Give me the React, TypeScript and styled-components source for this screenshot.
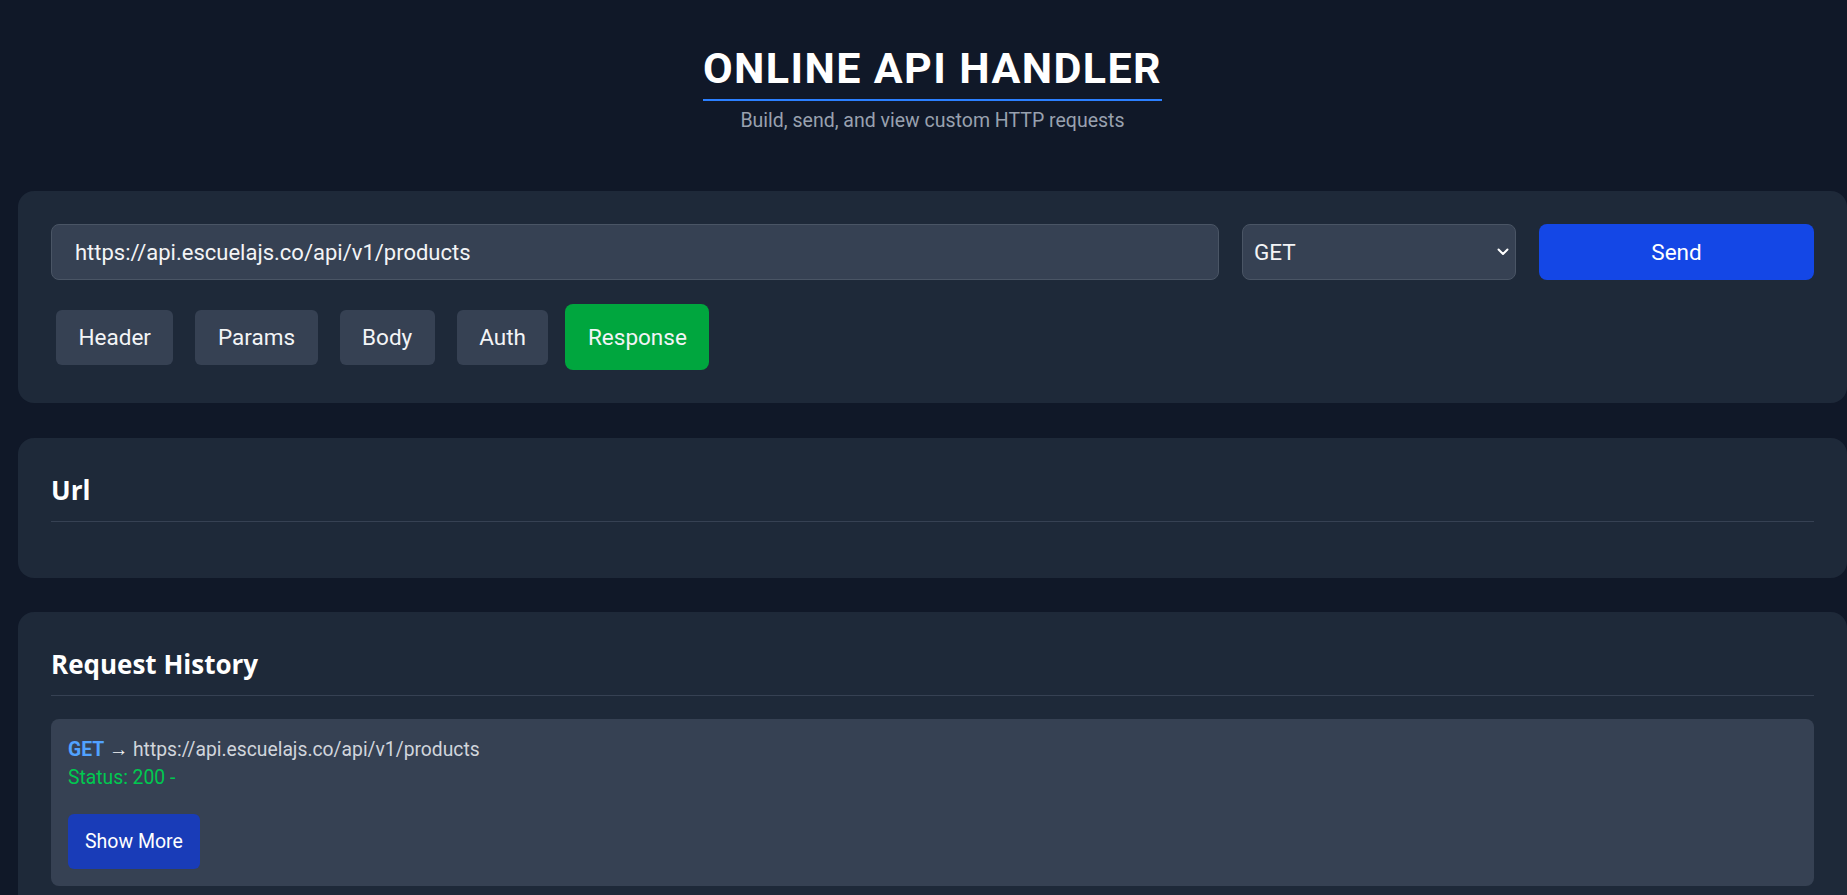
import React from "react";
import styled, { createGlobalStyle } from "styled-components";

const GlobalStyle = createGlobalStyle`
  html, body {
    margin: 0;
    padding: 0;
    overflow: hidden;
    background: #101828;
  }
  body {
    font-family: Roboto, "Liberation Sans", sans-serif;
    color: #f3f4f6;
  }
  * { box-sizing: border-box; }
`;

const Page = styled.div`
  padding: 0 0 0 18px;
`;

const Header = styled.header`
  text-align: center;
  padding-top: 42px;
`;

const Title = styled.h1`
  display: inline-block;
  margin: 0;
  font-size: 43px;
  line-height: 52px;
  font-weight: 700;
  letter-spacing: 1.4px;
  color: #ffffff;
  padding-bottom: 5px;
  border-bottom: 2px solid #2b7fff;
`;

const Subtitle = styled.p`
  margin: 7px 0 0;
  font-size: 19.5px;
  line-height: 26px;
  color: #99a1af;
`;

const Main = styled.main`
  margin-top: 57px;
  display: flex;
  flex-direction: column;
  gap: 34.5px;
`;

const Card = styled.section`
  background: #1e2939;
  border-radius: 16px;
  padding: 33px;
`;

const RequestBar = styled.div`
  display: grid;
  grid-template-columns: 1fr 274px 275px;
  gap: 23px;
  height: 56px;
`;

const UrlInput = styled.input`
  height: 56px;
  border: 1px solid #4a5565;
  background: #364153;
  border-radius: 8px;
  padding: 0 23px;
  font-family: Roboto, "Liberation Sans", sans-serif;
  font-size: 22px;
  color: #f3f4f6;
  outline: none;
`;

const SelectWrap = styled.div`
  position: relative;
  height: 56px;
`;

const MethodSelect = styled.select`
  appearance: none;
  -webkit-appearance: none;
  width: 100%;
  height: 56px;
  border: 1px solid #4a5565;
  background: #364153;
  border-radius: 8px;
  padding: 0 11px;
  font-family: Roboto, "Liberation Sans", sans-serif;
  font-size: 22.5px;
  color: #f3f4f6;
  outline: none;
`;

const Chevron = styled.svg`
  position: absolute;
  right: 7px;
  top: 50%;
  width: 12px;
  height: 8px;
  margin-top: -4px;
  pointer-events: none;
`;

const SendButton = styled.button`
  height: 56px;
  border: none;
  border-radius: 8px;
  background: #1447e6;
  color: #ffffff;
  font-family: Roboto, "Liberation Sans", sans-serif;
  font-size: 22.5px;
  cursor: pointer;
`;

const Tabs = styled.div`
  display: flex;
  align-items: center;
  gap: 12px;
  margin-top: 24px;
  height: 66px;
`;

const Tab = styled.button<{ $active?: boolean }>`
  height: ${(p) => (p.$active ? "66px" : "55px")};
  margin: 0 ${(p) => (p.$active ? "0" : "5px")};
  padding: 0 22.5px;
  border: none;
  border-radius: ${(p) => (p.$active ? "8px" : "6px")};
  background: ${(p) => (p.$active ? "#00a63e" : "#364153")};
  color: #f3f4f6;
  font-family: Roboto, "Liberation Sans", sans-serif;
  font-size: 22.5px;
  cursor: pointer;
`;

const SectionTitle = styled.h2`
  margin: 0 0 23px;
  padding-bottom: 11px;
  border-bottom: 1px solid #364153;
  font-family: "Open Sans", Roboto, sans-serif;
  font-size: 26px;
  line-height: 39px;
  font-weight: 700;
  color: #ffffff;
`;

const HistoryItem = styled.div`
  background: #364153;
  border-radius: 8px;
  padding: 17px;
`;

const HistoryLine = styled.div<{ $status?: boolean }>`
  font-size: 19.3px;
  line-height: 28px;
  color: ${(p) => (p.$status ? "#00c950" : "#d1d5dc")};
`;

const Method = styled.span`
  font-weight: 700;
  color: #51a2ff;
`;

const Arrow = styled.span`
  color: #f3f4f6;
`;

const ShowMore = styled.button`
  margin-top: 22px;
  height: 55px;
  padding: 0 17px;
  border: none;
  border-radius: 6px;
  background: #193cb8;
  color: #ffffff;
  font-family: Roboto, "Liberation Sans", sans-serif;
  font-size: 19.5px;
  cursor: pointer;
`;

const tabs = ["Header", "Params", "Body", "Auth", "Response"];

export default function App() {
  const url = "https://api.escuelajs.co/api/v1/products";
  return (
    <Page>
      <GlobalStyle />
      <Header>
        <Title>ONLINE API HANDLER</Title>
        <Subtitle>Build, send, and view custom HTTP requests</Subtitle>
      </Header>
      <Main>
        <Card>
          <RequestBar>
            <UrlInput defaultValue={url} />
            <SelectWrap>
              <MethodSelect defaultValue="GET">
                <option>GET</option>
                <option>POST</option>
                <option>PUT</option>
                <option>PATCH</option>
                <option>DELETE</option>
              </MethodSelect>
              <Chevron viewBox="0 0 12 8">
                <path d="M1.5 1.5 L6 6 L10.5 1.5" fill="none" stroke="#ffffff" strokeWidth="2" strokeLinecap="round" strokeLinejoin="round" />
              </Chevron>
            </SelectWrap>
            <SendButton>Send</SendButton>
          </RequestBar>
          <Tabs>
            {tabs.map((t) => (
              <Tab key={t} $active={t === "Response"}>
                {t}
              </Tab>
            ))}
          </Tabs>
        </Card>
        <Card>
          <SectionTitle>Url</SectionTitle>
        </Card>
        <Card>
          <SectionTitle>Request History</SectionTitle>
          <HistoryItem>
            <HistoryLine>
              <Method>GET</Method> <Arrow>→</Arrow> {url}
            </HistoryLine>
            <HistoryLine $status>Status: 200 -</HistoryLine>
            <ShowMore>Show More</ShowMore>
          </HistoryItem>
        </Card>
      </Main>
    </Page>
  );
}
